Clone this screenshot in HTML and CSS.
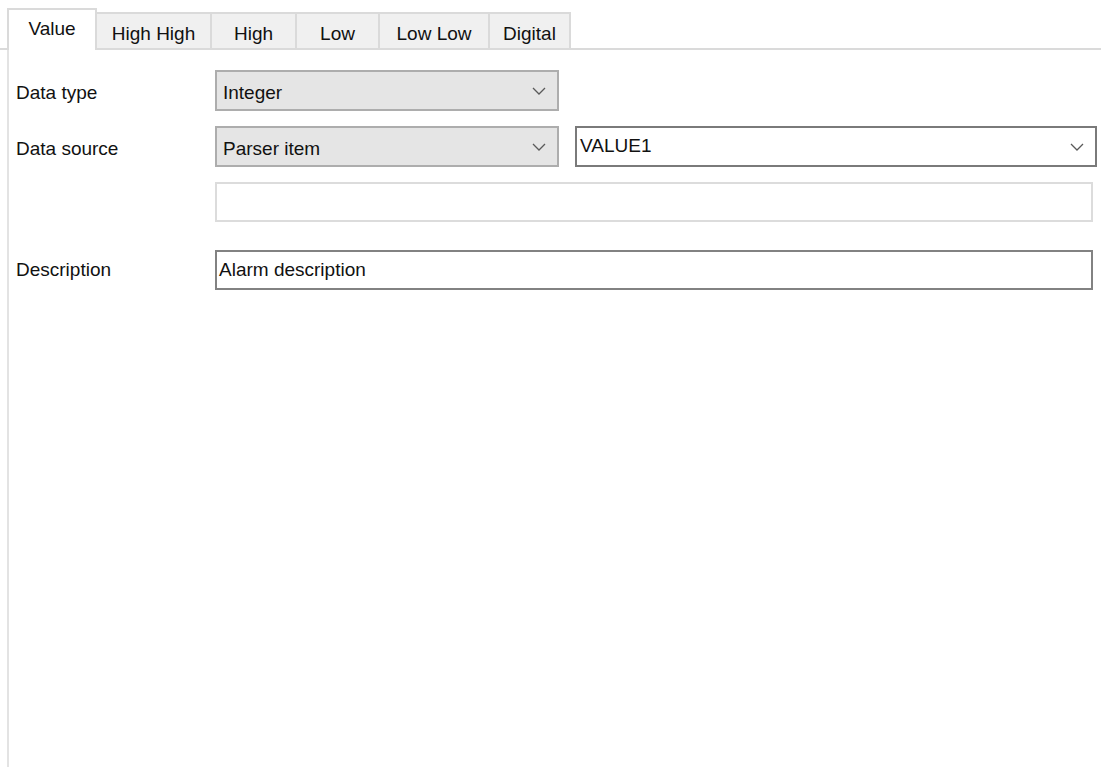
FILE: index.html
```html
<!DOCTYPE html>
<html lang="en">
<head>
<meta charset="utf-8">
<title>Alarm settings</title>
<link rel="stylesheet" href="styles.css">
</head>
<body>
<div class="tabstrip">
  <div class="tab tab-active tab-value">Value</div>
  <div class="tab tab-hh">High High</div>
  <div class="tab tab-h">High</div>
  <div class="tab tab-l">Low</div>
  <div class="tab tab-ll">Low Low</div>
  <div class="tab tab-dig">Digital</div>
</div>
<div class="page">
  <div class="row row-type">
    <div class="label">Data type</div>
    <div class="combo combo-fixed">
      <span class="combo-text">Integer</span>
      <svg class="chev" width="14" height="8" viewBox="0 0 14 8"><polyline points="1,1 7,7 13,1" fill="none" stroke="#5a5a5a" stroke-width="1.3"/></svg>
    </div>
  </div>
  <div class="row row-source">
    <div class="label">Data source</div>
    <div class="combo combo-fixed">
      <span class="combo-text">Parser item</span>
      <svg class="chev" width="14" height="8" viewBox="0 0 14 8"><polyline points="1,1 7,7 13,1" fill="none" stroke="#5a5a5a" stroke-width="1.3"/></svg>
    </div>
    <div class="combo combo-edit">
      <span class="combo-text edit-text">VALUE1</span>
      <svg class="chev" width="14" height="8" viewBox="0 0 14 8"><polyline points="1,1 7,7 13,1" fill="none" stroke="#5a5a5a" stroke-width="1.3"/></svg>
    </div>
  </div>
  <div class="row row-extra">
    <div class="label"></div>
    <div class="textbox textbox-disabled"></div>
  </div>
  <div class="row row-desc">
    <div class="label">Description</div>
    <div class="textbox textbox-active">Alarm description</div>
  </div>
</div>
</body>
</html>
```

FILE: styles.css
```css
html, body {
  margin: 0;
  padding: 0;
  background: #ffffff;
  height: 100%;
}

body {
  font-family: "Liberation Sans", Arial, sans-serif;
  font-size: 19px;
  color: #111;
  display: flex;
  flex-direction: column;
}

/* tab header */
.tabstrip {
  display: flex;
  align-items: flex-end;
  height: 50px;
  padding-left: 7px;
  border-bottom: 2px solid #dadada;
  box-sizing: border-box;
  flex: none;
}

.tab {
  box-sizing: border-box;
  height: 36px;
  background: #f0f0f0;
  border: 2px solid #dadada;
  border-bottom: none;
  border-left: none;
  display: flex;
  align-items: center;
  justify-content: center;
  padding-top: 6px;
}

.tab-active {
  height: 42px;
  background: #ffffff;
  border-left: 2px solid #dadada;
  margin-bottom: -2px;
  padding-top: 0;
  padding-bottom: 2px;
  position: relative;
  z-index: 1;
}

.tab-value { width: 90px; }
.tab-hh { width: 115px; }
.tab-h { width: 85px; }
.tab-l { width: 83px; }
.tab-ll { width: 110px; }
.tab-dig { width: 81px; }

/* page body */
.page {
  flex: 1;
  margin-left: 7px;
  border-left: 2px solid #e3e3e3;
  padding: 20px 8px 0 7px;
}

.row {
  display: flex;
  align-items: center;
}

.row-source,
.row-extra {
  margin-top: 15px;
}

.row-desc {
  margin-top: 28px;
}

.label {
  width: 199px;
  flex: none;
  padding-top: 4px;
}

.row-desc .label {
  padding-top: 0;
}

.combo {
  box-sizing: border-box;
  height: 41px;
  display: flex;
  align-items: center;
  justify-content: space-between;
  flex: none;
}

.combo-text {
  padding-top: 4px;
}

.combo-fixed {
  width: 344px;
  background: #e5e5e5;
  border: 2px solid #adadad;
  padding: 0 11px 0 6px;
}

.combo-edit {
  width: 522px;
  margin-left: 16px;
  background: #ffffff;
  border: 2px solid #7a7a7a;
  padding: 0 11px 0 3px;
}

.edit-text {
  padding-top: 0;
  padding-bottom: 2px;
}

.chev {
  display: block;
}

.textbox {
  box-sizing: border-box;
  flex: 1;
  height: 40px;
  background: #ffffff;
  display: flex;
  align-items: center;
  padding-left: 2px;
}

.textbox-disabled {
  border: 2px solid #dcdcdc;
}

.textbox-active {
  border: 2px solid #828282;
}
```
